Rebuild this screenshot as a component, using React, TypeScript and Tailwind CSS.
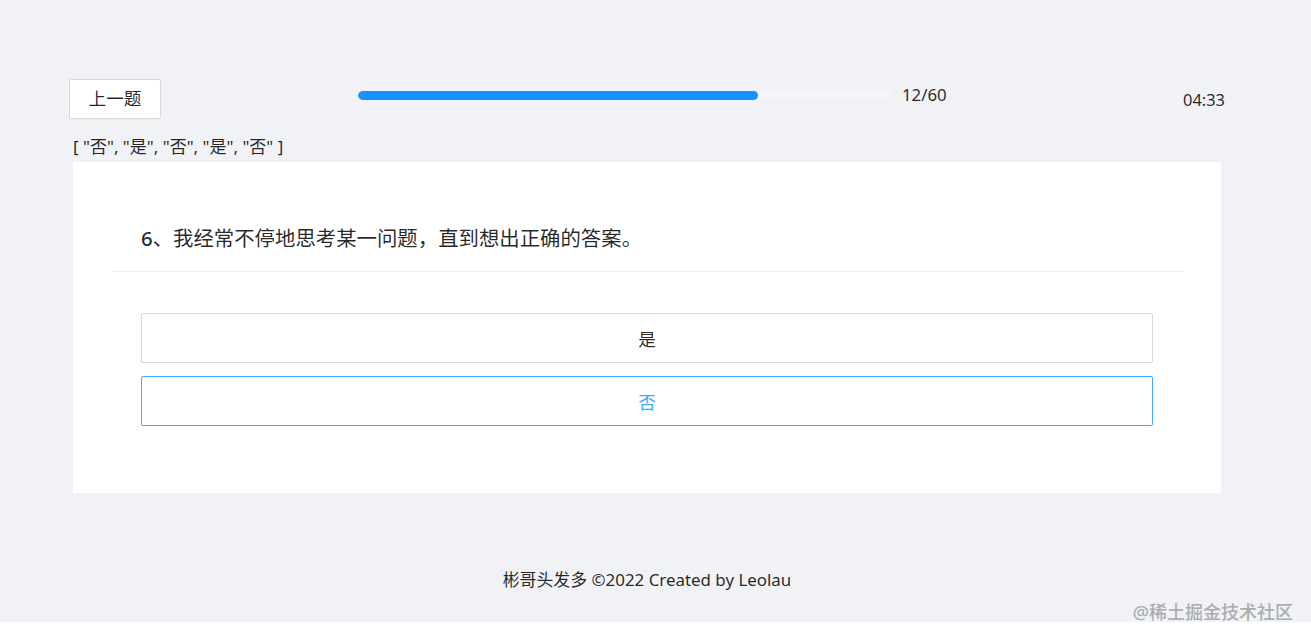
import React from "react";

export default function App() {
  const answers = ["否", "是", "否", "是", "否"];
  return (
    <div className="relative bg-white h-[644px] font-['Noto_Sans','Noto_Sans_CJK_SC',sans-serif] text-black/85 text-[17.6px]">
      <div className="h-[622px] bg-[#f0f2f5] flex flex-col">
        <div className="ml-[69px] w-[1156px] pt-[79px]">
          {/* top row */}
          <div className="flex items-start h-[40px]">
            <div className="w-[289px] shrink-0">
              <button className="w-[92px] h-[40px] bg-white border border-[#d9d9d9] rounded-[2px] leading-none text-[17.6px] text-black/85 shadow-[0_2px_0_rgba(0,0,0,0.016)]">
                上一题
              </button>
            </div>
            <div className="mt-[4px] flex items-center h-[24px]">
              <div className="w-[535px] h-[9px] rounded-full bg-[#f4f5f7] overflow-hidden">
                <div className="h-full w-[400px] rounded-full bg-[#1890ff]" />
              </div>
              <span className="ml-[9px] leading-[24px] text-[16.8px]">12/60</span>
            </div>
            <div className="flex-1 flex justify-end mt-[9px] leading-[24px] text-[16.4px]">04:33</div>
          </div>

          <div className="px-[4px]">
            <div className="mt-[15px] leading-[26px] text-[17px] whitespace-pre">
              {"[ " + answers.map((a) => `"${a}"`).join(", ") + " ]"}
            </div>

            {/* card */}
            <div className="mt-[2px] h-[331px] bg-white flex flex-col">
              <div className="pt-[62px] pl-[68px] leading-[28px] text-[20.4px]">
                <span className="font-medium">6</span>、我经常不停地思考某一问题，直到想出正确的答案。
              </div>
              <div className="mt-[19px] ml-[39px] mr-[37px] h-px bg-[#f0f0f0]" />
              <div className="mt-[41px] mx-[68px] flex flex-col gap-[13px]">
                <div className="h-[50px] border border-[#d9d9d9] rounded-[2px] flex items-center justify-center text-[17.6px] pt-[2px]">
                  是
                </div>
                <div className="h-[50px] border border-[#40a9ff] rounded-[2px] flex items-center justify-center text-[17.6px] text-[#40a9ff] pt-[2px]">
                  否
                </div>
              </div>
            </div>

            <div className="mt-[74px] leading-[26px] text-center text-[16.9px]">
              彬哥头发多 ©2022 Created by Leolau
            </div>
          </div>
        </div>
      </div>
      <div className="absolute right-[18px] top-[601px] text-[18px] leading-[22px] text-[#a9acb1] font-medium">
        @稀土掘金技术社区
      </div>
    </div>
  );
}
